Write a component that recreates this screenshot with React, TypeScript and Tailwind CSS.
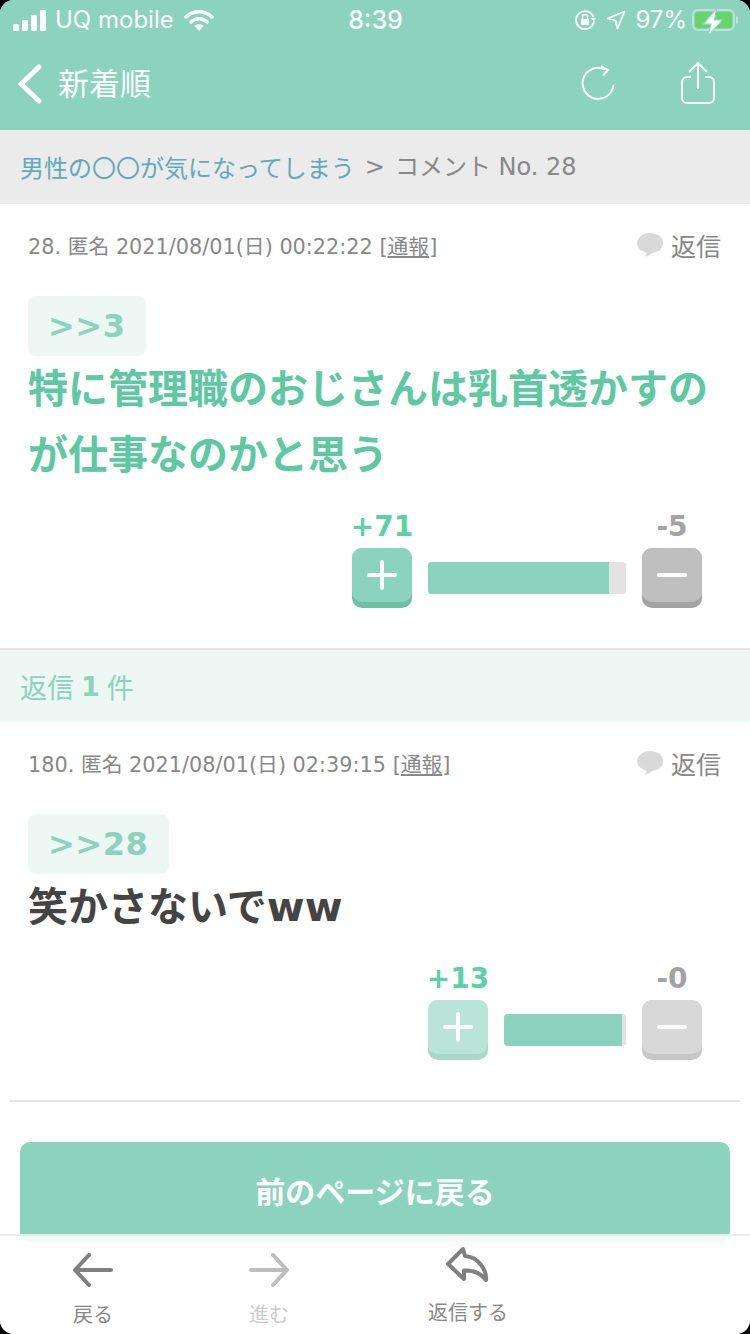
import React from 'react';

const cjk = "font-['Noto_Sans_CJK_JP',sans-serif]";
const latin = "font-['DejaVu_Sans','Noto_Sans_CJK_JP',sans-serif]";
const latinBold = `${latin} font-bold`;

interface VoteProps {
  plus: string;
  minus: string;
  barWidth: number;
  fillWidth: number;
  faded?: boolean;
}

const VoteBox: React.FC<VoteProps> = ({ plus, minus, barWidth, fillWidth, faded }) => (
  <div className="flex justify-end pr-[48px] gap-4 items-end">
    <div className="flex flex-col items-center w-[60px]">
      <span className={`${latinBold} text-[28px] leading-[32px] mb-[5px] text-[#5dd0a8]`}>{plus}</span>
      <div className={`w-[60px] h-[60px] rounded-[10px] bg-[#6fbfa5] ${faded ? 'opacity-60' : ''}`}>
        <div className="h-[54px] rounded-[10px] bg-[#8bd3bd] flex items-center justify-center">
          <svg width="30" height="30" viewBox="0 0 30 30">
            <path d="M15 2v26M2 15h26" stroke="#fff" strokeWidth="4" strokeLinecap="round" />
          </svg>
        </div>
      </div>
    </div>
    <div className="h-[32px] rounded-[4px] bg-[#e3e3e3] mb-[14px] overflow-hidden" style={{ width: barWidth }}>
      <div className="h-full bg-[#8bd3bd]" style={{ width: fillWidth }} />
    </div>
    <div className="flex flex-col items-center w-[60px]">
      <span className={`${latinBold} text-[28px] leading-[32px] mb-[5px] text-[#a3a3a3]`}>{minus}</span>
      <div className={`w-[60px] h-[60px] rounded-[10px] bg-[#a3a3a3] ${faded ? 'opacity-60' : ''}`}>
        <div className="h-[54px] rounded-[10px] bg-[#bfbfbf] flex items-center justify-center">
          <svg width="30" height="30" viewBox="0 0 30 30">
            <path d="M2 15h26" stroke="#fff" strokeWidth="4" strokeLinecap="round" />
          </svg>
        </div>
      </div>
    </div>
  </div>
);

interface CommentProps {
  meta: string;
  anchor: string;
  lines: React.ReactNode[];
  green?: boolean;
  vote: VoteProps;
  bottom: string;
}

const Comment: React.FC<CommentProps> = ({ meta, anchor, lines, green, vote, bottom }) => (
  <div className={`bg-white ${bottom}`}>
    <div className="flex items-center justify-between pl-[28px] pr-[29px] pt-[16px] h-[68px]">
      <span className={`${latin} mt-[3px] text-[20.8px] text-[#888888]`}>
        {meta} [<span className="underline">通報</span>]
      </span>
      <div className="flex items-center gap-2">
        <svg width="26" height="26" viewBox="0 0 26 26" className="-mt-[2px]">
          <path d="M13 1c7 0 13 3.500 13 10s-6 10-11 10c-2 2-5 3.500-7 3.500 1-1 1.500-2.500 1.500-4C4 19 0 16 0 11S6 1 13 1z" fill="#d9d9d9" />
        </svg>
        <span className={`${cjk} text-[25px] text-[#888888]`}>返信</span>
      </div>
    </div>
    <div className="pl-[28px] pt-[24px]">
      <span className={`${latinBold} inline-flex items-center h-[60px] pl-[20px] pr-[21px] rounded-[8px] bg-[#edf7f3] text-[32px] tracking-[0.5px] text-[#8bd3bd]`}>
        {anchor}
      </span>
    </div>
    <div className={`${latinBold} pl-[28px] text-[40px] leading-[66px] ${green ? 'text-[#5dc8a2]' : 'text-[#444444]'}`}>
      {lines.map((l, i) => (
        <div key={i}>{l}</div>
      ))}
    </div>
    <div className="pt-[23px]">
      <VoteBox {...vote} />
    </div>
  </div>
);

export default function App() {
  return (
    <div className="relative w-[750px] h-[1334px] bg-black overflow-hidden">
      <div className="relative h-full rounded-[14px] bg-white overflow-hidden">
        {/* Header */}
        <div className="h-[130px] bg-[#8bd3bd] text-white">
          <div className="h-[40px] flex items-center justify-between pl-[13px] pr-[12px] font-['Inter',sans-serif]">
            <div className="flex items-center w-[300px]">
              <svg width="34" height="22" viewBox="0 0 34 22">
                <rect x="0" y="15" width="6" height="7" rx="1.500" fill="#fff" />
                <rect x="9" y="11" width="6" height="11" rx="1.500" fill="#fff" />
                <rect x="18" y="6" width="6" height="16" rx="1.500" fill="#fff" />
                <rect x="27" y="1" width="6" height="21" rx="1.500" fill="#fff" />
              </svg>
              <span className="ml-[8px] text-[24px] leading-none">UQ mobile</span>
              <svg width="30" height="24" viewBox="0 0 30 24" className="ml-[10px]">
                <path d="M2 9c7-7 19-7 26 0M7 14c4.500-4.500 11.500-4.500 16 0" stroke="#fff" strokeWidth="3.500" fill="none" strokeLinecap="round" />
                <path d="M10.500 18c2.500-2.500 6.500-2.500 9 0L15 23z" fill="#fff" />
              </svg>
            </div>
            <span className="text-[25px] leading-none font-medium">8:39</span>
            <div className="flex items-center w-[300px] justify-end">
              <svg width="22" height="22" viewBox="0 0 22 22">
                <path d="M19.500 8A9 9 0 1 0 20 12" stroke="#fff" strokeWidth="1.800" fill="none" />
                <path d="M16.500 9h5.500l-2.500 3z" fill="#fff" />
                <rect x="7" y="10" width="8" height="6" rx="1" fill="#fff" />
                <path d="M8.500 10V8a2.500 2.500 0 0 1 5 0v2" stroke="#fff" strokeWidth="1.300" fill="none" />
              </svg>
              <svg width="20" height="20" viewBox="0 0 20 20" className="ml-[10px]">
                <path d="M18.500 1.500 1.500 8.500l8 2 2 8z" stroke="#fff" strokeWidth="1.800" fill="none" strokeLinejoin="round" />
              </svg>
              <span className="ml-[9px] text-[24px] leading-none">97%</span>
              <div className="ml-[5px] relative flex items-center">
                <div className="w-[43px] h-[22px] rounded-[6px] border-2 border-white/40 p-[1px]">
                  <div className="h-full w-full rounded-[3px] bg-[#69d36c]" />
                </div>
                <div className="w-[2px] h-[8px] ml-[1px] rounded-r-sm bg-white/40" />
                <svg width="22" height="30" viewBox="0 0 20 28" className="absolute left-[10px] -top-[2px]">
                  <path d="M13.500 1 1 16h7l-2.500 11L19 12h-7.500z" fill="#fff" stroke="#8bd3bd" strokeWidth="1" />
                </svg>
              </div>
            </div>
          </div>
          <div className="h-[90px] flex items-center pl-[18px]">
            <svg width="24" height="40" viewBox="0 0 24 40" className="-mt-[3px]">
              <path d="M21 3 3 20l18 17" stroke="#fff" strokeWidth="5" fill="none" strokeLinecap="round" strokeLinejoin="round" />
            </svg>
            <span className={`${cjk} ml-[16px] text-[31px] leading-none -mt-[7px]`}>新着順</span>
            <svg width="34" height="36" viewBox="0 0 34 36" className="ml-[430px] -mt-[4px]">
              <path d="M24 4.500A15.500 15.500 0 1 0 32.500 20" stroke="#fff" strokeWidth="2" fill="none" />
              <path d="M20 1l7 4-5 5.500" stroke="#fff" strokeWidth="2" fill="none" />
            </svg>
            <svg width="34" height="42" viewBox="0 0 34 42" className="ml-[66px] -mt-[4px]">
              <path d="M10 15H6a5 5 0 0 0-5 5v16a5 5 0 0 0 5 5h22a5 5 0 0 0 5-5V20a5 5 0 0 0-5-5h-4" stroke="#fff" strokeWidth="2" fill="none" />
              <path d="M17 27V2M8 10l9-9 9 9" stroke="#fff" strokeWidth="2" fill="none" />
            </svg>
          </div>
        </div>

        {/* Breadcrumb */}
        <div className={`${latin} h-[74px] bg-[#ebebeb] flex items-center pl-[20px] text-[24px] text-[#888888]`}>
          <span className={`${cjk} text-[#62a9ba]`}>男性の〇〇が気になってしまう</span>
          <span className="ml-[10px]">&gt;</span>
          <span className="ml-[10px]">コメント No. 28</span>
        </div>

        <Comment
          meta="28. 匿名 2021/08/01(日) 00:22:22"
          anchor=">>3"
          lines={['特に管理職のおじさんは乳首透かすの', 'が仕事なのかと思う']}
          green
          vote={{ plus: '+71', minus: '-5', barWidth: 198, fillWidth: 181 }}
          bottom="h-[444px]"
        />

        {/* Reply count */}
        <div className={`${cjk} h-[74px] border-t-2 border-[#e6e6e6] bg-[#edf7f3] flex items-center pl-[20px] pt-[2px] text-[27px] text-[#8bd3bd]`}>
          返信 <span className={`${latinBold} mx-[7px]`}>1</span> 件
        </div>

        <Comment
          meta="180. 匿名 2021/08/01(日) 02:39:15"
          anchor=">>28"
          lines={[<>笑かさないで<span className="text-[41px]">ww</span></>]}
          vote={{ plus: '+13', minus: '-0', barWidth: 122, fillWidth: 118, faded: true }}
          bottom="h-[378px]"
        />

        <div className="mx-[10px] h-[2px] bg-[#e3e3e3]" />

        <div className="px-[20px] pt-[40px]">
          <div className={`${cjk} h-[100px] rounded-[10px] bg-[#8bd3bd] flex items-center justify-center text-white text-[30px] font-bold`}>
            <span className="pb-[4px]">前のページに戻る</span>
          </div>
        </div>

        {/* Bottom toolbar */}
        <div className={`${cjk} absolute left-0 right-0 bottom-0 h-[100px] bg-white/90 border-t-2 border-[#e6e6e6]/70 grid grid-cols-[186px_166px_232px] text-[20px]`}>
          <div className="flex flex-col items-center text-[#888888] pt-[17px]">
            <svg width="42" height="34" viewBox="0 0 42 34">
              <path d="M39 17H3M17 2 3 17l14 15" stroke="#808080" strokeWidth="4" fill="none" strokeLinecap="round" strokeLinejoin="round" />
            </svg>
            <span className="mt-[13px] leading-[28px]">戻る</span>
          </div>
          <div className="flex flex-col items-center text-[#cccccc] pt-[17px]">
            <svg width="42" height="34" viewBox="0 0 42 34">
              <path d="M3 17h36M25 2l14 15-14 15" stroke="#bdbdbd" strokeWidth="4" fill="none" strokeLinecap="round" strokeLinejoin="round" />
            </svg>
            <span className="mt-[13px] leading-[28px]">進む</span>
          </div>
          <div className="flex flex-col items-center text-[#888888] pt-[9px]">
            <svg width="46" height="42" viewBox="0 0 46 42">
              <path d="M18 4 3 19l16 15v-8.500c9-.500 16 1.500 22 9.500 1-9-7-23-21-24z" stroke="#808080" strokeWidth="4" fill="none" strokeLinejoin="round" />
            </svg>
            <span className="mt-[11px] leading-[28px]">返信する</span>
          </div>
        </div>
      </div>
    </div>
  );
}
